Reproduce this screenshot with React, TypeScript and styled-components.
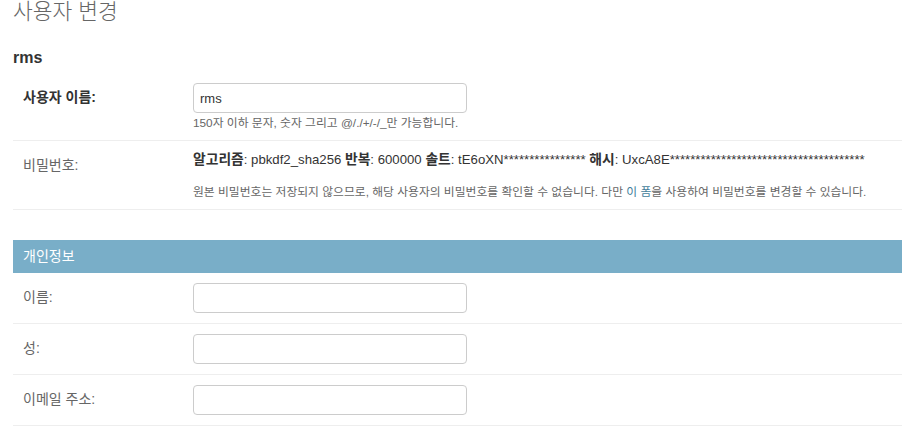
import React, { FC } from 'react';
import styled, { createGlobalStyle } from 'styled-components';

const GlobalStyle = createGlobalStyle`
    html, body {
        margin: 0;
        padding: 0;
        background: #fff;
    }
    body {
        font-family: "Liberation Sans", "Noto Sans CJK KR", sans-serif;
        font-size: 14px;
        color: #333;
    }
`;

const Content = styled.div`
    padding: 0 0 0 13px;
`;

const Title = styled.h1`
    margin: 0 0 24px;
    font-size: 21.5px;
    line-height: 24px;
    font-weight: 300;
    color: #666;
`;

const Subtitle = styled.h2`
    margin: 0 0 5px;
    font-size: 16px;
    line-height: 20px;
    font-weight: 700;
    color: #333;
`;

const Fieldset = styled.fieldset`
    margin: 0 0 30px;
    padding: 0;
    border: none;
    min-width: 0;
`;

const FieldsetHeader = styled.h2`
    margin: 0;
    padding: 8px 10px;
    font-size: 14px;
    line-height: 17px;
    font-weight: 400;
    background: #79aec8;
    color: #fff;
`;

const Row = styled.div`
    display: flex;
    align-items: flex-start;
    padding: 10px;
    border-bottom: 1px solid #eee;
`;

const Label = styled.label<{ $required?: boolean }>`
    flex: 0 0 160px;
    margin-right: 10px;
    padding-top: 5px;
    font-size: 14px;
    line-height: 18px;
    font-weight: ${(p) => (p.$required ? 700 : 400)};
    color: ${(p) => (p.$required ? '#333' : '#666')};
`;

const Field = styled.div`
    display: flex;
    flex-direction: column;
    min-width: 0;
`;

const TextInput = styled.input`
    box-sizing: border-box;
    width: 274px;
    height: 30px;
    padding: 5px 6px;
    border: 1px solid #ccc;
    border-radius: 4px;
    font-family: inherit;
    font-size: 13px;
    color: #333;
    background: #fff;
    outline: none;
`;

const Help = styled.div<{ $gap: number }>`
    margin-top: ${(p) => p.$gap}px;
    font-size: 11.8px;
    line-height: 14px;
    color: #666;
    white-space: nowrap;

    a {
        color: #447e9b;
        text-decoration: none;
    }
`;

const Readonly = styled.div`
    font-size: 13.2px;
    line-height: 18px;
    color: #333;
    white-space: nowrap;

    strong {
        font-size: 13.8px;
        font-weight: 700;
    }
`;

const salt = 'tE6oXN' + '*'.repeat(16);
const hash = 'UxcA8E' + '*'.repeat(38);

const InputRow: FC<{ label: string; value?: string; required?: boolean; help?: string }> = ({
    label,
    value = '',
    required,
    help,
}) => (
    <Row>
        <Label $required={required}>{label}</Label>
        <Field>
            <TextInput type="text" defaultValue={value} />
            {help && <Help $gap={3}>{help}</Help>}
        </Field>
    </Row>
);

const App: FC = () => {
    return (
        <>
            <GlobalStyle />
            <Content>
                <Title>사용자 변경</Title>
                <Subtitle>rms</Subtitle>

                <Fieldset>
                    <InputRow
                        label="사용자 이름:"
                        value="rms"
                        required
                        help="150자 이하 문자, 숫자 그리고 @/./+/-/_만 가능합니다."
                    />
                    <Row>
                        <Label>비밀번호:</Label>
                        <Field>
                            <Readonly>
                                <strong>알고리즘</strong>: pbkdf2_sha256 <strong>반복</strong>: 600000{' '}
                                <strong>솔트</strong>: {salt} <strong>해시</strong>: {hash}
                            </Readonly>
                            <Help $gap={16}>
                                원본 비밀번호는 저장되지 않으므로, 해당 사용자의 비밀번호를 확인할 수 없습니다. 다만{' '}
                                <a href="../password/">이 폼</a>을 사용하여 비밀번호를 변경할 수 있습니다.
                            </Help>
                        </Field>
                    </Row>
                </Fieldset>

                <Fieldset>
                    <FieldsetHeader>개인정보</FieldsetHeader>
                    <InputRow label="이름:" />
                    <InputRow label="성:" />
                    <InputRow label="이메일 주소:" />
                </Fieldset>
            </Content>
        </>
    );
};

export default App;
